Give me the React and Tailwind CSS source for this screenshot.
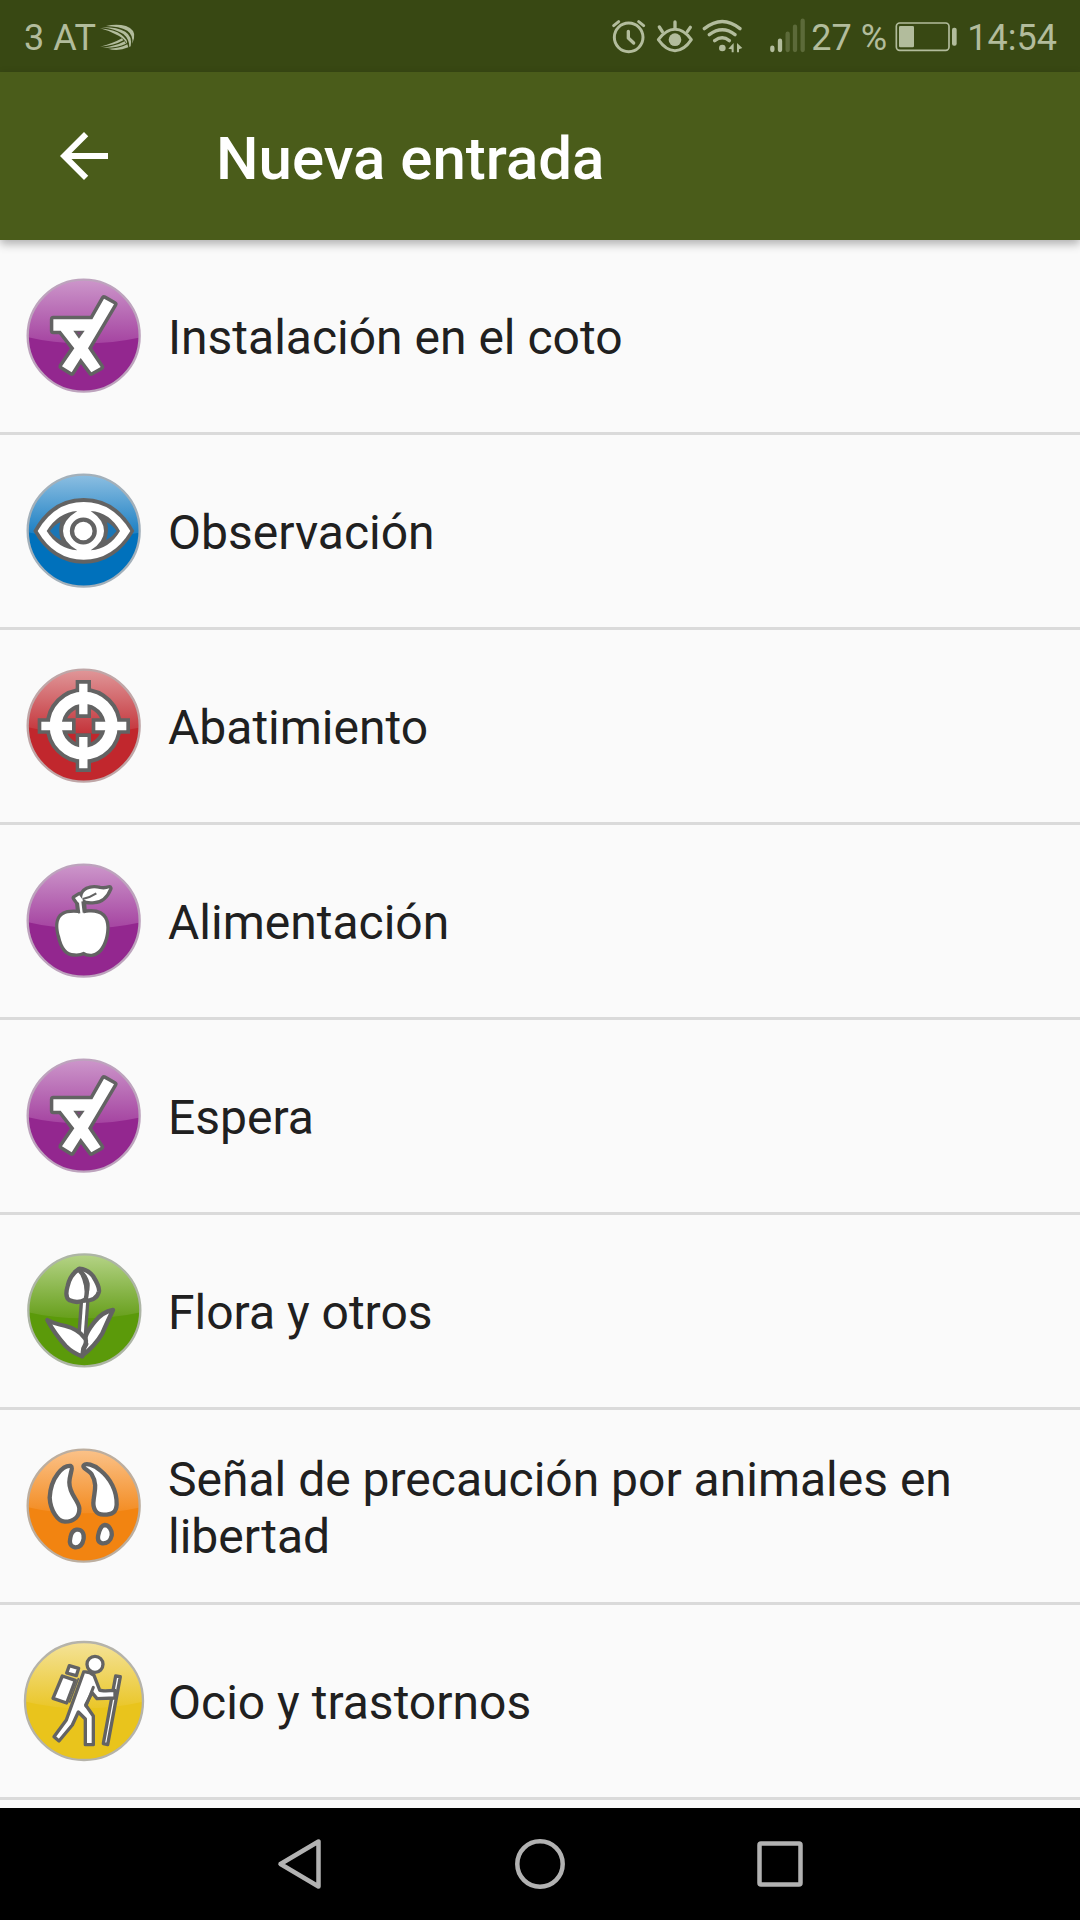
import { useId } from "react";

const OUTLINE = "#636363";

// ── Glossy round badge behind every category glyph ─────────────────────────
function Badge({ base, top, mid, ring = "#b4b0b4", cx = 206, cy = 212, r = 168, children }) {
  const id = useId();

  return (
    <svg viewBox="0 0 420 420" className="w-[140px] h-[140px] shrink-0">
      <defs>
        <linearGradient id={`${id}g`} x1="0" y1="0" x2="0" y2="1">
          <stop offset="0.05" stopColor={top} />
          <stop offset="1" stopColor={mid} />
        </linearGradient>
        <clipPath id={`${id}c`}>
          <circle cx={cx} cy={cy} r={r} />
        </clipPath>
      </defs>
      <circle cx={cx} cy={cy} r={r} fill={base} />
      <path d="M0 30H420V206Q320 235 206 235T0 206Z" fill={`url(#${id}g)`} clipPath={`url(#${id}c)`} />
      <circle cx={cx} cy={cy} r={r} fill="none" stroke={ring} strokeWidth="7" />
      {children}
    </svg>
  );
}

function StandIcon() {
  return (
    <Badge base="#93278f" top="#cd98cb" mid="#a544a1" ring="#bda3bd">
      <path
        d="M115 163H232L267 101L297 118L219 250L257 306L229 322L197 279L170 322L141 304L178 250L137 197H115Z"
        fill="#fff"
        stroke={OUTLINE}
        strokeWidth="21"
        strokeLinejoin="round"
        style={{ paintOrder: "stroke" }}
      />
      <path d="M175 197H209L192 221Z" fill={OUTLINE} />
      <path d="M186 201H199L192 210Z" fill="#7c4a7a" />
    </Badge>
  );
}

function EyeIcon() {
  return (
    <Badge base="#0071bc" top="#8fc0e2" mid="#147bc1" ring="#a3b0ba">
      <path d="M55 213Q108 114 206 114T358 213Q302 311 206 311T55 213Z" fill={OUTLINE} />
      <path d="M68 213Q118 126 206 126T346 213Q294 299 206 299T68 213Z" fill="#fff" />
      <path d="M95 213Q130 157 187 153Q144 180 144 213T187 271Q128 266 95 213Z" fill={OUTLINE} />
      <path d="M315 213Q284 157 227 153Q267 180 267 213T227 271Q284 266 315 213Z" fill={OUTLINE} />
      <path d="M105 213Q118 195 136 187Q128 213 138 241Q118 231 105 213Z" fill="#1a76b6" />
      <path d="M305 213Q292 195 276 187Q283 213 273 241Q292 231 305 213Z" fill="#1a76b6" />
      <circle cx="205" cy="213" r="34" fill="#fff" stroke={OUTLINE} strokeWidth="13" />
    </Badge>
  );
}

function TargetIcon() {
  return (
    <Badge base="#c1272d" top="#e0999b" mid="#c4343a" ring="#bfa6a7">
      <circle cx="206" cy="212" r="84" fill="none" stroke={OUTLINE} strokeWidth="60" />
      <g stroke={OUTLINE} strokeWidth="46" strokeLinejoin="round">
        <path d="M205 75V189M205 235V351M68 213H182M230 213H345" />
      </g>
      <circle cx="206" cy="212" r="84" fill="none" stroke="#fff" strokeWidth="36" />
      <g stroke="#fff" strokeWidth="25">
        <path d="M205 86V178M205 246V340M79 213H171M241 213H334" />
      </g>
    </Badge>
  );
}

function AppleIcon() {
  return (
    <Badge base="#93278f" top="#cd98cb" mid="#a544a1" ring="#bda3bd">
      <g fill="#fff" stroke={OUTLINE} strokeWidth="20" strokeLinejoin="round" style={{ paintOrder: "stroke" }}>
        <path d="M194 196L190 158L180 144L193 136L202 148C198 120 228 110 254 117Q270 120 283 115Q268 152 238 153Q216 156 203 147L206 196Z" />
        <path d="M200 191Q178 186 158 190C128 197 126 225 135 258Q146 310 178 310Q193 312 206 305Q216 312 230 311C258 308 274 268 274 232C274 193 246 180 200 191Z" />
      </g>
      <path d="M193 198L189 152H201L207 198Z" fill="#fff" />
      <path d="M189 158L193 190M202 154L206 188M203 147Q226 142 244 130" fill="none" stroke={OUTLINE} strokeWidth="6" />
    </Badge>
  );
}

function TulipIcon() {
  return (
    <Badge base="#5b9a0a" top="#b6d488" mid="#679f1c" ring="#adb5a5" cx={208} cy={211}>
      <path d="M209 182L201 288" stroke={OUTLINE} strokeWidth="29" />
      <path d="M209 184L201 292" stroke="#fff" strokeWidth="9" />
      <g fill="#fff" stroke={OUTLINE} strokeWidth="13" strokeLinejoin="round">
        <path d="M200 348Q203 328 214 312C205 298 212 278 240 244Q262 216 294 210Q274 252 262 280Q240 318 200 348Z" />
        <path d="M97 240Q114 250 152 258Q190 268 207 292Q220 302 205 325L202 349Q174 340 152 318Q118 280 97 240Z" />
        <path d="M193 86Q218 88 234 108Q254 140 252 154Q246 182 208 182Z" />
        <path d="M190 88Q165 105 158 138Q148 172 164 181Q190 192 212 178Q220 150 208 116Q202 98 190 88Z" />
      </g>
      <path d="M192 86Q216 96 224 130Q226 160 210 182Q214 130 192 86Z" fill={OUTLINE} />
    </Badge>
  );
}

function TracksIcon() {
  return (
    <Badge base="#f28411" top="#fbc38b" mid="#f38c22" ring="#bcae9f">
      <g fill="#fff" stroke={OUTLINE} strokeWidth="13" strokeLinejoin="round">
        <path d="M167 93C146 90 107 125 104 188C106 226 128 260 150 260C178 260 194 244 193 220C190 194 163 180 163 142C164 116 176 98 167 93Z" />
        <path d="M206 91C212 84 236 88 256 106C286 130 306 168 305 208C304 232 292 239 266 239C242 238 232 220 236 194C238 172 248 146 230 118C220 104 200 100 206 91Z" />
        <path d="M184 284C200 282 208 294 206 311C203 328 194 338 180 337C166 334 162 324 166 308C168 296 174 286 184 284Z" />
        <path d="M269 270C282 270 292 286 290 302C287 318 276 326 262 325C250 322 247 312 250 299C254 282 260 271 269 270Z" />
      </g>
    </Badge>
  );
}

function HikerIcon() {
  return (
    <Badge base="#e9c41c" top="#f4e296" mid="#eac628" ring="#b5b3aa" cx={207} cy={213} r={177}>
      <g fill="#fff" stroke={OUTLINE} strokeWidth="10" strokeLinejoin="round">
        <path d="M163 107L191 115L184 137L155 129Z" />
        <path d="M142 138L181 151L155 219L114 205Z" />
        <path d="M302 138L316 140L278 344L265 341Z" />
        <path d="M206 126Q222 124 237 136L254 180Q260 184 300 181V204L246 206L231 188L212 225L235 258V344H211V267L190 246L172 285L132 333L117 320L154 270Z" />
        <circle cx="240" cy="103" r="24" />
      </g>
      <path d="M213 228L235 172" stroke={OUTLINE} strokeWidth="9" strokeLinecap="round" />
      <path d="M190 146L164 216" stroke={OUTLINE} strokeWidth="5" strokeLinecap="round" />
    </Badge>
  );
}

const CATEGORIES = [
  { label: "Instalación en el coto", Icon: StandIcon },
  { label: "Observación", Icon: EyeIcon },
  { label: "Abatimiento", Icon: TargetIcon },
  { label: "Alimentación", Icon: AppleIcon },
  { label: "Espera", Icon: StandIcon },
  { label: "Flora y otros", Icon: TulipIcon },
  { label: "Señal de precaución por animales en libertad", Icon: TracksIcon },
  { label: "Ocio y trastornos", Icon: HikerIcon },
];

// ── Status bar ─────────────────────────────────────────────────────────────
function StatusBar() {
  return (
    <div className="h-[72px] shrink-0 flex items-center bg-[#384813] pl-6 pr-6 text-[36px] leading-none text-[#b2bc9c] whitespace-nowrap">
      <span className="pt-[3px]">3 AT</span>
      {/* Keyboard */}
      <svg viewBox="294 60 114 96" className="ml-0.5 mt-0.5 w-[38px] h-8" fill="currentColor">
        <path d="M318 75Q350 68 378 75Q408 86 402 112L397 128Q400 102 382 89Q358 76 318 75Z" />
        <path d="M306 79Q350 78 376 92Q398 106 392 136L388 138Q388 114 370 99Q346 84 306 79Z" />
        <path d="M300 82Q344 86 364 101Q386 118 380 128Q376 116 356 104Q332 90 300 82Z" />
        <path d="M300 137Q338 128 366 112L370 118Q342 134 300 137Z" />
        <path d="M308 140Q346 136 374 121L378 128Q350 142 308 140Z" />
        <path d="M324 143Q354 144 382 130L385 139Q354 152 324 143Z" />
      </svg>

      <div className="ml-auto flex items-center">
        {/* Alarm */}
        <svg viewBox="30 48 111 120" className="w-[37px] h-10" fill="none" stroke="currentColor" strokeWidth="9" strokeLinecap="round">
          <circle cx="86" cy="112" r="43" />
          <path d="M85 94V114L101 129" strokeWidth="10" strokeLinejoin="round" />
          <path d="M41 77L56 65M116 65L131 77" strokeWidth="9" />
        </svg>
        {/* Eye comfort */}
        <svg viewBox="165 48 120 120" className="ml-2 w-10 h-10" fill="none" stroke="currentColor" strokeWidth="9" strokeLinecap="round">
          <path d="M175 119Q198 88 225 88T274 119Q252 152 225 152T175 119Z" strokeLinejoin="round" />
          <circle cx="225" cy="119" r="19" fill="currentColor" stroke="none" />
          <path d="M225 66V84M178 81L187 95M271 82L262 95" strokeWidth="10" />
        </svg>
        {/* Wifi */}
        <svg viewBox="300 48 135 120" className="ml-[5px] w-[45px] h-10" fill="none" stroke="currentColor" strokeWidth="10" strokeLinecap="round">
          <path d="M313 86Q367 43 420 86M328 104Q367 75 405 104M344 122Q367 105 388 122" />
          <circle cx="367" cy="144" r="10" fill="currentColor" stroke="none" />
          <path d="M385 146L401 129V157H395V148ZM427 144L411 129V157H417V148Z" fill="currentColor" stroke="none" />
        </svg>
        {/* Signal */}
        <svg viewBox="504 48 120 120" className="ml-[23px] w-10 h-10" stroke="currentColor" strokeWidth="13" strokeLinecap="round">
          <path d="M517 143V150M540 122V150" />
          <path d="M563 101V150M585 80V150M608 62V150" className="text-[#5c6a39]" />
        </svg>
        <span className="ml-[3px] pt-[3px] w-[75px]">27 %</span>
        {/* Battery */}
        <svg viewBox="882 48 195 120" className="ml-2 w-[65px] h-10" fill="currentColor">
          <rect x="889" y="69" width="158" height="82" rx="10" fill="none" stroke="currentColor" strokeWidth="5" />
          <rect x="897" y="78" width="45" height="64" rx="4" />
          <rect x="1056" y="83" width="14" height="54" rx="6" />
        </svg>
        <span className="ml-2 -mr-px pt-[3px]">14:54</span>
      </div>
    </div>
  );
}

function AppBar() {
  return (
    <header className="relative z-10 h-[168px] shrink-0 flex items-center bg-[#4a5c1a] pl-12 shadow-[0_4px_9px_rgba(0,0,0,0.3)]">
      <button className="w-[72px] h-[72px]">
        <svg viewBox="0 0 24 24" className="w-full h-full" fill="#fff">
          <path d="M20 11H7.83l5.59-5.59L12 4l-8 8 8 8 1.41-1.41L7.83 13H20v-2z" />
        </svg>
      </button>
      <h1 className="ml-24 pt-[5px] text-[60px] leading-none font-medium text-white">Nueva entrada</h1>
    </header>
  );
}

function NavBar() {
  return (
    <nav className="h-28 shrink-0 flex items-center justify-between bg-black px-[270px]">
      <svg viewBox="0 0 60 60" className="w-[60px] h-[60px]" fill="none" stroke="#b2b2b2" strokeWidth="4.5" strokeLinejoin="round">
        <path d="M10.5 30L48.5 7.5V52.5Z" />
      </svg>
      <svg viewBox="0 0 60 60" className="w-[60px] h-[60px]" fill="none" stroke="#b2b2b2" strokeWidth="4.5">
        <circle cx="30" cy="30" r="22.7" />
      </svg>
      <svg viewBox="0 0 60 60" className="w-[60px] h-[60px]" fill="none" stroke="#b2b2b2" strokeWidth="4.5">
        <rect x="9.5" y="9.5" width="41" height="41" rx="1.5" />
      </svg>
    </nav>
  );
}

// ── Main ───────────────────────────────────────────────────────────────────
export default function App() {
  return (
    <div className="w-[1080px] h-[1920px] flex flex-col overflow-hidden bg-[#fafafa] font-['Roboto',sans-serif]">
      <StatusBar />
      <AppBar />
      <ul className="flex-1 overflow-hidden">
        {CATEGORIES.map(({ label, Icon }) => (
          <li key={label} className="h-[195px] flex items-center border-b-[3px] border-[#dadada] pl-[15px] pr-10 pb-0.5">
            <Icon />
            <span className="ml-[13px] pt-[5px] text-[48px] leading-[57px] text-[#202020]">{label}</span>
          </li>
        ))}
      </ul>
      <NavBar />
    </div>
  );
}
